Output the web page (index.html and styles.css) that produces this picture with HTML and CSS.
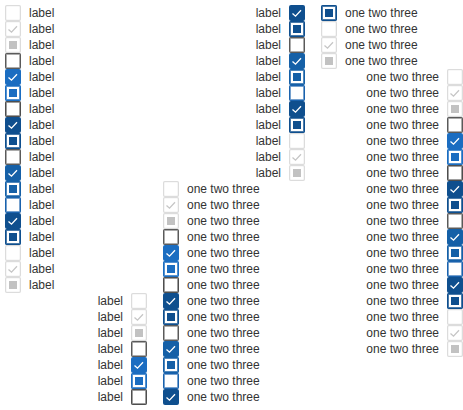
FILE: index.html
```html
<!DOCTYPE html>
<html>
<head>
<meta charset="utf-8">
<link rel="stylesheet" href="styles.css">
</head>
<body>
<svg class="defs" width="0" height="0"><symbol id="chk" viewBox="0 0 16 16"><polyline points="3.5,8.5 6.5,11.2 12,5.2"/></symbol></svg>
<div class="grid">
  <div class="item"><span class="cb dis-off"></span><span class="txt">label</span></div>
  <div class="item"><span class="cb dis-on"><svg class="chk"><use href="#chk"/></svg></span><span class="txt">label</span></div>
  <div class="item"><span class="cb dis-ind"><span class="sq"></span></span><span class="txt">label</span></div>
  <div class="item"><span class="cb off"></span><span class="txt">label</span></div>
  <div class="item"><span class="cb on"><svg class="chk"><use href="#chk"/></svg></span><span class="txt">label</span></div>
  <div class="item"><span class="cb ind"><span class="sq"></span></span><span class="txt">label</span></div>
  <div class="item"><span class="cb off2"></span><span class="txt">label</span></div>
  <div class="item"><span class="cb on-dark"><svg class="chk"><use href="#chk"/></svg></span><span class="txt">label</span></div>
  <div class="item"><span class="cb ind-dark"><span class="sq"></span></span><span class="txt">label</span></div>
  <div class="item"><span class="cb off"></span><span class="txt">label</span></div>
  <div class="item"><span class="cb on-mid"><svg class="chk"><use href="#chk"/></svg></span><span class="txt">label</span></div>
  <div class="item"><span class="cb ind-mid"><span class="sq"></span></span><span class="txt">label</span></div>
  <div class="item"><span class="cb off-focus"></span><span class="txt">label</span></div>
  <div class="item"><span class="cb on-dark"><svg class="chk"><use href="#chk"/></svg></span><span class="txt">label</span></div>
  <div class="item"><span class="cb ind-dark"><span class="sq"></span></span><span class="txt">label</span></div>
  <div class="item"><span class="cb dis-off"></span><span class="txt">label</span></div>
  <div class="item"><span class="cb dis-on"><svg class="chk"><use href="#chk"/></svg></span><span class="txt">label</span></div>
  <div class="item"><span class="cb dis-ind"><span class="sq"></span></span><span class="txt">label</span></div>

  <div class="item end"><span class="txt">label</span><span class="cb dis-off"></span></div>
  <div class="item end"><span class="txt">label</span><span class="cb dis-on"><svg class="chk"><use href="#chk"/></svg></span></div>
  <div class="item end"><span class="txt">label</span><span class="cb dis-ind"><span class="sq"></span></span></div>
  <div class="item end"><span class="txt">label</span><span class="cb off"></span></div>
  <div class="item end"><span class="txt">label</span><span class="cb on"><svg class="chk"><use href="#chk"/></svg></span></div>
  <div class="item end"><span class="txt">label</span><span class="cb ind"><span class="sq"></span></span></div>
  <div class="item end"><span class="txt">label</span><span class="cb off2"></span></div>
  <div class="item end"><span class="txt">label</span><span class="cb on-dark"><svg class="chk"><use href="#chk"/></svg></span></div>
  <div class="item end"><span class="txt">label</span><span class="cb ind-dark"><span class="sq"></span></span></div>
  <div class="item end"><span class="txt">label</span><span class="cb off"></span></div>
  <div class="item end"><span class="txt">label</span><span class="cb on-mid"><svg class="chk"><use href="#chk"/></svg></span></div>
  <div class="item end"><span class="txt">label</span><span class="cb ind-mid"><span class="sq"></span></span></div>
  <div class="item end"><span class="txt">label</span><span class="cb off-focus"></span></div>
  <div class="item end"><span class="txt">label</span><span class="cb on-dark"><svg class="chk"><use href="#chk"/></svg></span></div>
  <div class="item end"><span class="txt">label</span><span class="cb ind-dark"><span class="sq"></span></span></div>
  <div class="item end"><span class="txt">label</span><span class="cb dis-off"></span></div>
  <div class="item end"><span class="txt">label</span><span class="cb dis-on"><svg class="chk"><use href="#chk"/></svg></span></div>
  <div class="item end"><span class="txt">label</span><span class="cb dis-ind"><span class="sq"></span></span></div>

  <div class="item"><span class="cb dis-off"></span><span class="txt">one two three</span></div>
  <div class="item"><span class="cb dis-on"><svg class="chk"><use href="#chk"/></svg></span><span class="txt">one two three</span></div>
  <div class="item"><span class="cb dis-ind"><span class="sq"></span></span><span class="txt">one two three</span></div>
  <div class="item"><span class="cb off"></span><span class="txt">one two three</span></div>
  <div class="item"><span class="cb on"><svg class="chk"><use href="#chk"/></svg></span><span class="txt">one two three</span></div>
  <div class="item"><span class="cb ind"><span class="sq"></span></span><span class="txt">one two three</span></div>
  <div class="item"><span class="cb off2"></span><span class="txt">one two three</span></div>
  <div class="item"><span class="cb on-dark"><svg class="chk"><use href="#chk"/></svg></span><span class="txt">one two three</span></div>
  <div class="item"><span class="cb ind-dark"><span class="sq"></span></span><span class="txt">one two three</span></div>
  <div class="item"><span class="cb off"></span><span class="txt">one two three</span></div>
  <div class="item"><span class="cb on-mid"><svg class="chk"><use href="#chk"/></svg></span><span class="txt">one two three</span></div>
  <div class="item"><span class="cb ind-mid"><span class="sq"></span></span><span class="txt">one two three</span></div>
  <div class="item"><span class="cb off-focus"></span><span class="txt">one two three</span></div>
  <div class="item"><span class="cb on-dark"><svg class="chk"><use href="#chk"/></svg></span><span class="txt">one two three</span></div>
  <div class="item"><span class="cb ind-dark"><span class="sq"></span></span><span class="txt">one two three</span></div>
  <div class="item"><span class="cb dis-off"></span><span class="txt">one two three</span></div>
  <div class="item"><span class="cb dis-on"><svg class="chk"><use href="#chk"/></svg></span><span class="txt">one two three</span></div>
  <div class="item"><span class="cb dis-ind"><span class="sq"></span></span><span class="txt">one two three</span></div>

  <div class="item end"><span class="txt">one two three</span><span class="cb dis-off"></span></div>
  <div class="item end"><span class="txt">one two three</span><span class="cb dis-on"><svg class="chk"><use href="#chk"/></svg></span></div>
  <div class="item end"><span class="txt">one two three</span><span class="cb dis-ind"><span class="sq"></span></span></div>
  <div class="item end"><span class="txt">one two three</span><span class="cb off"></span></div>
  <div class="item end"><span class="txt">one two three</span><span class="cb on"><svg class="chk"><use href="#chk"/></svg></span></div>
  <div class="item end"><span class="txt">one two three</span><span class="cb ind"><span class="sq"></span></span></div>
  <div class="item end"><span class="txt">one two three</span><span class="cb off2"></span></div>
  <div class="item end"><span class="txt">one two three</span><span class="cb on-dark"><svg class="chk"><use href="#chk"/></svg></span></div>
  <div class="item end"><span class="txt">one two three</span><span class="cb ind-dark"><span class="sq"></span></span></div>
  <div class="item end"><span class="txt">one two three</span><span class="cb off"></span></div>
  <div class="item end"><span class="txt">one two three</span><span class="cb on-mid"><svg class="chk"><use href="#chk"/></svg></span></div>
  <div class="item end"><span class="txt">one two three</span><span class="cb ind-mid"><span class="sq"></span></span></div>
  <div class="item end"><span class="txt">one two three</span><span class="cb off-focus"></span></div>
  <div class="item end"><span class="txt">one two three</span><span class="cb on-dark"><svg class="chk"><use href="#chk"/></svg></span></div>
  <div class="item end"><span class="txt">one two three</span><span class="cb ind-dark"><span class="sq"></span></span></div>
  <div class="item end"><span class="txt">one two three</span><span class="cb dis-off"></span></div>
  <div class="item end"><span class="txt">one two three</span><span class="cb dis-on"><svg class="chk"><use href="#chk"/></svg></span></div>
  <div class="item end"><span class="txt">one two three</span><span class="cb dis-ind"><span class="sq"></span></span></div>
</div>
</body>
</html>
```

FILE: styles.css
```css
html, body {
  margin: 0;
  overflow: hidden;
  background: #fff;
}
body {
  padding: 5px 0 5px 5px;
  font-family: "Liberation Sans", Arial, sans-serif;
  font-size: 12px;
  color: #333;
}
.defs {
  position: absolute;
  width: 0;
  height: 0;
}
.grid {
  width: 458px;
  height: 400px;
  column-count: 3;
  column-gap: 16px;
  column-fill: auto;
}
.item {
  display: flex;
  align-items: center;
  gap: 8px;
  height: 16px;
  line-height: 16px;
  break-inside: avoid;
  white-space: nowrap;
}
.item.end {
  justify-content: flex-end;
}
.cb {
  flex: none;
  width: 16px;
  height: 16px;
  box-sizing: border-box;
  border-radius: 2px;
  background: #fff;
  display: flex;
  align-items: center;
  justify-content: center;
}
.chk {
  width: 16px;
  height: 16px;
  display: block;
  fill: none;
  stroke: #fff;
  stroke-width: 1.3;
}
.sq {
  width: 8px;
  height: 8px;
  display: block;
}

.dis-off, .dis-on, .dis-ind {
  box-shadow: inset 0 0 0 1px #dcdcdc, inset 0 0 0 1.6px rgba(220, 220, 220, 0.4);
}
.dis-on .chk { stroke: #c6c6c6; }
.dis-ind .sq { background: #c2c2c2; }

.off { box-shadow: inset 0 0 0 1px #5a5a5a, inset 0 0 0 2px rgba(90, 90, 90, 0.5); }
.off2 { box-shadow: inset 0 0 0 1px #4e4e4e, inset 0 0 0 2px rgba(78, 78, 78, 0.55); }
.off-focus { box-shadow: inset 0 0 0 1px #1a62ad, inset 0 0 0 2px rgba(26, 98, 173, 0.6); }

.on { background: #1b6dc1; }
.ind { box-shadow: inset 0 0 0 1px #1b6dc1, inset 0 0 0 2px rgba(27, 109, 193, 0.75); }
.ind .sq { background: #1b6dc1; }

.on-dark { background: #0f4f8e; }
.ind-dark { box-shadow: inset 0 0 0 1px #0f4f8e, inset 0 0 0 2px rgba(15, 79, 142, 0.75); }
.ind-dark .sq { background: #0f4f8e; }

.on-mid { background: #1560a7; }
.ind-mid { box-shadow: inset 0 0 0 1px #1560a7, inset 0 0 0 2px rgba(21, 96, 167, 0.75); }
.ind-mid .sq { background: #1560a7; }
```
